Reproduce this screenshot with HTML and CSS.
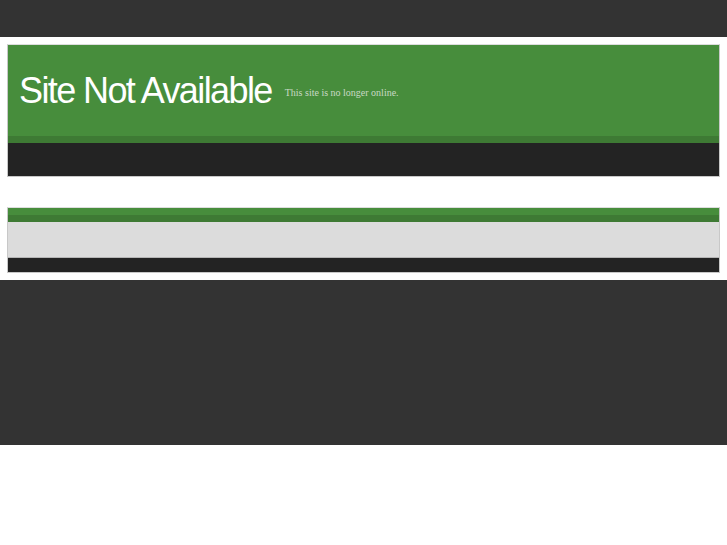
FILE: index.html
```html
<!DOCTYPE html>
<html lang="en">
<head>
  <meta charset="UTF-8">
  <title>Site Not Available</title>
  <link rel="stylesheet" href="styles.css">
</head>
<body>
  <div class="topbar"></div>
  <div class="wrap">
    <div class="box">
      <div class="banner">
        <h1 class="title">Site Not Available</h1>
        <p class="tagline">This site is no longer online.</p>
      </div>
      <div class="stripe"></div>
      <div class="nav"></div>
    </div>
    <div class="box second">
      <div class="thin"></div>
      <div class="stripe"></div>
      <div class="content"></div>
      <div class="bottom"></div>
    </div>
  </div>
  <div class="footer"></div>
</body>
</html>
```

FILE: styles.css
```css
body {
  margin: 0;
  background: #fff;
  font-family: "Liberation Sans", Arial, sans-serif;
}
.topbar {
  height: 37px;
  background: #333;
}
.wrap {
  padding: 7px;
}
.box {
  border: 1px solid #c8c8c8;
  border-top-color: #ddd;
}
.second {
  margin-top: 30px;
}
.banner {
  background: #478d3c;
  height: 91px;
  display: flex;
  align-items: center;
  padding-left: 11px;
}
.title {
  margin: 0;
  font-weight: normal;
  font-size: 36px;
  letter-spacing: -1.6px;
  color: #fff;
}
.tagline {
  margin: 3px 0 0 13px;
  font-family: "Liberation Serif", "Times New Roman", serif;
  font-size: 10px;
  color: #c9d9c5;
}
.stripe {
  height: 7px;
  background: #3e7a34;
}
.nav {
  height: 33px;
  background: #232323;
}
.thin {
  height: 7px;
  background: #478d3c;
}
.content {
  height: 35px;
  background: #dcdcdc;
  border-bottom: 1px solid #b5b5b5;
}
.bottom {
  height: 14px;
  background: #232323;
}
.footer {
  height: 165px;
  background: #333;
}
```
